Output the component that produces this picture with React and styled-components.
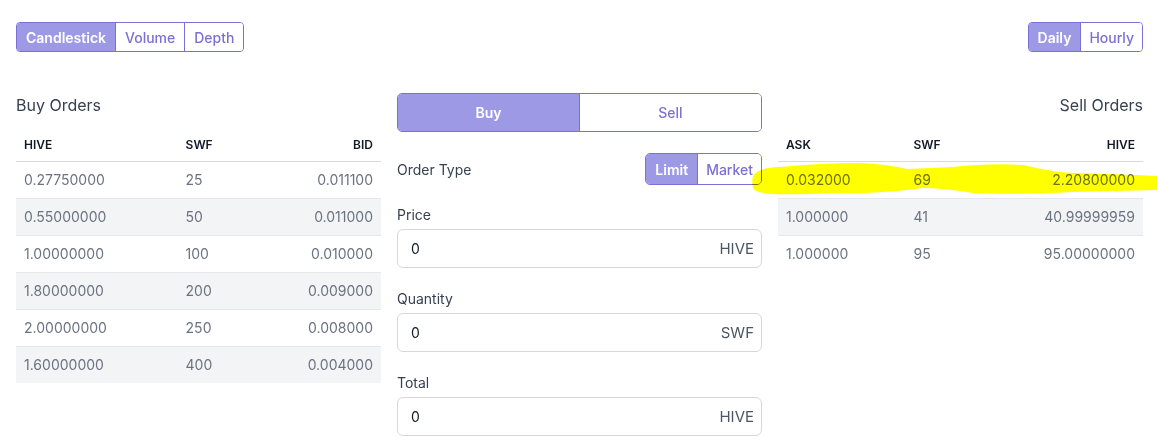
import React from "react";
import styled, { createGlobalStyle } from "styled-components";

const PURPLE = "#7b70d3";
const ACTIVE = "#9e99e5";

const Global = createGlobalStyle`
  html, body { margin: 0; padding: 0; background: #fff; overflow-x: hidden; }
  body { font-family: Inter, "Noto Sans", sans-serif; color: #374151; }
  * { box-sizing: border-box; }
`;

const Page = styled.div`
  padding: 22px 14px 0 16px;
`;

const Toolbar = styled.div`
  display: flex;
  justify-content: space-between;
  align-items: center;
`;

const Group = styled.div`
  display: inline-flex;
  height: ${(p) => p.$h || 30}px;
  width: ${(p) => (p.$full ? "100%" : "auto")};
  border: 1px solid ${PURPLE};
  border-radius: ${(p) => p.$r || 4}px;
  overflow: hidden;
`;

const Seg = styled.button`
  flex: ${(p) => (p.$grow ? 1 : "none")};
  border: none;
  border-left: ${(p) => (p.$first ? "none" : `1px solid ${PURPLE}`)};
  background: ${(p) => (p.$active ? ACTIVE : "#fff")};
  color: ${(p) => (p.$active ? "#fff" : PURPLE)};
  font-family: Inter, sans-serif;
  font-size: 14px;
  font-weight: ${(p) => (p.$active ? 600 : 500)};
  padding: 0 ${(p) => p.$px || 9}px;
  cursor: pointer;
`;

const Columns = styled.div`
  display: grid;
  grid-template-columns: repeat(3, 1fr);
  gap: 16px;
  margin-top: 41px;
`;

const Panel = styled.div`
  position: relative;
  display: flex;
  flex-direction: column;
`;

const Heading = styled.h2`
  margin: 0 0 12px;
  font-size: 16px;
  line-height: 24px;
  font-weight: 400;
  color: #374151;
  text-align: ${(p) => p.$align || "left"};
`;

const Table = styled.table`
  width: 100%;
  border-collapse: collapse;
  font-size: 14px;
`;

const Th = styled.th`
  padding: 8px;
  font-size: 12px;
  line-height: 16px;
  font-weight: 600;
  color: #111827;
  text-transform: uppercase;
  text-align: ${(p) => p.$align || "left"};
  border-bottom: 1px solid #d7d9de;
`;

const Tr = styled.tr`
  background: ${(p) => (p.$striped ? "#f3f4f6" : "#fff")};
  border-bottom: 1px solid #e5e7eb;
  &:last-child {
    border-bottom: none;
  }
`;

const Td = styled.td`
  padding: 8px;
  line-height: 20px;
  color: #6b7280;
  text-align: ${(p) => p.$align || "left"};
  white-space: nowrap;
`;

const Form = styled.div`
  display: flex;
  flex-direction: column;
`;

const TypeRow = styled.div`
  display: flex;
  justify-content: space-between;
  align-items: center;
  margin-top: 21px;
`;

const TypeLabel = styled.span`
  font-size: 14px;
  color: #374151;
`;

const Label = styled.label`
  display: block;
  font-size: 14px;
  line-height: 20px;
  color: #374151;
  margin-top: ${(p) => p.$mt || 21}px;
  margin-bottom: 4px;
`;

const InputBox = styled.div`
  display: flex;
  align-items: center;
  height: 39px;
  border: 1px solid #d6d8dc;
  border-radius: 6px;
  padding: 0 7px 0 13px;
`;

const Input = styled.input`
  flex: 1;
  min-width: 0;
  border: none;
  outline: none;
  background: transparent;
  font-family: Inter, sans-serif;
  font-size: 14px;
  color: #111827;
  padding: 0;
`;

const Suffix = styled.span`
  font-size: 15px;
  color: #4b5563;
`;

const Highlight = styled.svg`
  position: absolute;
  left: -26px;
  top: 65px;
  width: calc(100% + 40px);
  height: 42px;
  mix-blend-mode: multiply;
  pointer-events: none;
`;

const buyOrders = [
  ["0.27750000", "25", "0.011100"],
  ["0.55000000", "50", "0.011000"],
  ["1.00000000", "100", "0.010000"],
  ["1.80000000", "200", "0.009000"],
  ["2.00000000", "250", "0.008000"],
  ["1.60000000", "400", "0.004000"],
];

const sellOrders = [
  ["0.032000", "69", "2.20800000"],
  ["1.000000", "41", "40.99999959"],
  ["1.000000", "95", "95.00000000"],
];

function OrderTable({ cols, rows }) {
  return (
    <Table>
      <thead>
        <tr>
          <Th>{cols[0]}</Th>
          <Th>{cols[1]}</Th>
          <Th $align="right">{cols[2]}</Th>
        </tr>
      </thead>
      <tbody>
        {rows.map((r, i) => (
          <Tr key={i} $striped={i % 2 === 1}>
            <Td>{r[0]}</Td>
            <Td>{r[1]}</Td>
            <Td $align="right">{r[2]}</Td>
          </Tr>
        ))}
      </tbody>
    </Table>
  );
}

function Field({ label, unit, mt }) {
  return (
    <>
      <Label $mt={mt}>{label}</Label>
      <InputBox>
        <Input defaultValue="0" />
        <Suffix>{unit}</Suffix>
      </InputBox>
    </>
  );
}

export default function App() {
  return (
    <>
      <Global />
      <Page>
        <Toolbar>
          <Group>
            <Seg $first $active>Candlestick</Seg>
            <Seg>Volume</Seg>
            <Seg>Depth</Seg>
          </Group>
          <Group>
            <Seg $first $active>Daily</Seg>
            <Seg $px={8}>Hourly</Seg>
          </Group>
        </Toolbar>
        <Columns>
          <Panel>
            <Heading>Buy Orders</Heading>
            <OrderTable cols={["HIVE", "SWF", "BID"]} rows={buyOrders} />
          </Panel>
          <Form>
            <Group $full $h={39} $r={5}>
              <Seg $first $active $grow>Buy</Seg>
              <Seg $grow>Sell</Seg>
            </Group>
            <TypeRow>
              <TypeLabel>Order Type</TypeLabel>
              <Group $h={32} $r={5}>
                <Seg $first $active>Limit</Seg>
                <Seg $px={8}>Market</Seg>
              </Group>
            </TypeRow>
            <Field label="Price" unit="HIVE" mt={20} />
            <Field label="Quantity" unit="SWF" />
            <Field label="Total" unit="HIVE" />
          </Form>
          <Panel>
            <Heading $align="right">Sell Orders</Heading>
            <OrderTable cols={["ASK", "SWF", "HIVE"]} rows={sellOrders} />
            <Highlight viewBox="0 0 405 42" preserveAspectRatio="none">
              <path
                fill="#ffff00"
                d="M2 16 Q10 9 28 9 Q70 5 105 5 Q135 6 155 11 Q180 10 200 9 Q240 5 271 7 Q300 14 321 15 Q360 16 405 18 L405 32 Q360 33 321 34 Q260 37 221 35 Q190 30 171 30 Q130 36 88 35 Q40 37 20 36 Q4 35 1 30 Q-1 22 2 16 Z"
              />
            </Highlight>
          </Panel>
        </Columns>
      </Page>
    </>
  );
}
